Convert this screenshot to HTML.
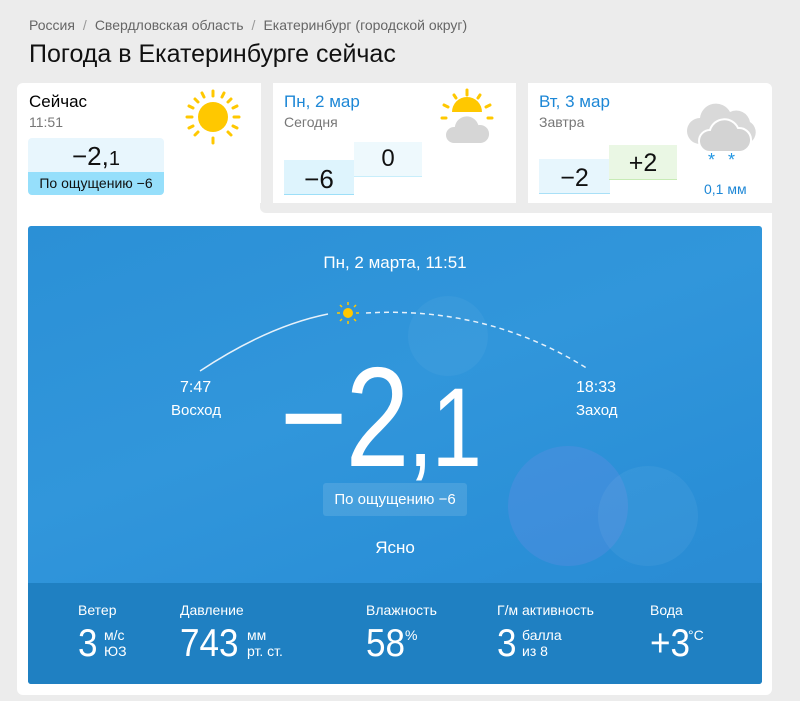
<!DOCTYPE html>
<html><head><meta charset="utf-8"><style>
*{box-sizing:border-box;margin:0;padding:0}
body{width:800px;height:701px;background:#ececec;font-family:"Liberation Sans",sans-serif;position:relative;overflow:hidden;color:#000}
.a{position:absolute}
.bc{left:29px;top:17px;font-size:14px;color:#666}
.bc span{margin:0 8px;color:#999}
h1{position:absolute;left:29px;top:40px;font-size:25px;font-weight:normal;color:#111}
.card{position:absolute;background:#fff;border-radius:6px}
.t1{font-size:17px}
.sub{font-size:14px;color:#777}
.blue{color:#1d87d6}
.box{position:absolute;text-align:center;color:#111}
.panel{position:absolute;left:28px;top:226px;width:734px;height:458px;border-radius:3px;overflow:hidden;background:linear-gradient(160deg,#2b90d6 0%,#3196db 40%,#2a8fd7 70%,#2a88d0 100%)}
.w{color:#fff}
.stats{position:absolute;left:0;top:357px;width:734px;height:101px;background:#1f80c2}
.lab{position:absolute;top:19px;font-size:14px;color:#fff}
.val{position:absolute;top:39px;font-size:39px;color:#fff;transform:scaleX(0.9);transform-origin:left}
.sm{position:absolute;font-size:14px;color:#fff;line-height:16px}
</style></head><body>
<div class="a bc">Россия<span>/</span>Свердловская область<span>/</span>Екатеринбург (городской округ)</div>
<h1>Погода в Екатеринбурге сейчас</h1>

<div class="card" style="left:17px;top:83px;width:755px;height:612px;border-radius:6px"></div>
<div class="a" style="left:261px;top:80px;width:12px;height:128px;background:#ececec"></div>
<div class="a" style="left:516px;top:80px;width:12px;height:128px;background:#ececec"></div>
<div class="a" style="left:260px;top:203px;width:520px;height:10px;background:#ececec;border-radius:0 0 0 6px"></div>
<div class="a" style="left:772px;top:80px;width:28px;height:140px;background:#ececec"></div>

<div class="a t1" style="left:29px;top:92px">Сейчас</div>
<div class="a sub" style="left:29px;top:114px">11:51</div>
<svg class="a" style="left:183px;top:88px" width="60" height="58" viewBox="0 0 60 58"><circle cx="30" cy="29" r="15" fill="#ffc800"/><g stroke="#ffc800" stroke-width="3" stroke-linecap="round"><line x1="30" y1="3" x2="30" y2="8"/><line x1="30" y1="50" x2="30" y2="55"/><line x1="4" y1="29" x2="9" y2="29"/><line x1="51" y1="29" x2="56" y2="29"/><line x1="12" y1="11" x2="15" y2="14"/><line x1="45" y1="44" x2="48" y2="47"/><line x1="48" y1="11" x2="45" y2="14"/><line x1="12" y1="47" x2="15" y2="44"/><line x1="19" y1="5" x2="21" y2="9"/><line x1="41" y1="5" x2="39" y2="9"/><line x1="6" y1="18" x2="10" y2="20"/><line x1="54" y1="18" x2="50" y2="20"/><line x1="6" y1="40" x2="10" y2="38"/><line x1="54" y1="40" x2="50" y2="38"/></g></svg>
<div class="box" style="left:28px;top:138px;width:136px;height:34px;background:#e8f6fd;border-radius:4px 4px 0 0;font-size:26px;line-height:36px">−2,<span style="font-size:20px">1</span></div>
<div class="box" style="left:28px;top:172px;width:136px;height:23px;background:#96dffb;border-radius:0 0 4px 4px;font-size:14px;line-height:23px">По ощущению −6</div>

<div class="card" style="left:273px;top:83px;width:243px;height:120px"></div>
<div class="a t1 blue" style="left:284px;top:92px">Пн, 2 мар</div>
<div class="a sub" style="left:284px;top:114px">Сегодня</div>
<svg class="a" style="left:440px;top:88px" width="56" height="58" viewBox="0 0 56 58"><path d="M12 24a15 15 0 0 1 30 0z" fill="#ffc800"/><g stroke="#ffc800" stroke-width="3" stroke-linecap="round"><line x1="27" y1="2" x2="27" y2="7"/><line x1="14" y1="7" x2="16" y2="10"/><line x1="40" y1="7" x2="38" y2="10"/><line x1="4" y1="17" x2="8" y2="19"/><line x1="50" y1="17" x2="46" y2="19"/><line x1="2" y1="30" x2="6" y2="30"/><line x1="48" y1="30" x2="52" y2="30"/></g><path d="M14 56a9 9 0 0 1 0-18a13 13 0 0 1 25-2a10 10 0 0 1 2 20z" fill="#d6d6d6" stroke="#fff" stroke-width="2"/></svg>
<div class="box" style="left:284px;top:160px;width:70px;height:35px;background:#def4fd;border-bottom:1px solid #9ddff8;font-size:26px;line-height:38px">−6</div>
<div class="box" style="left:354px;top:142px;width:68px;height:35px;background:#eef9fd;border-bottom:1px solid #c8eefb;font-size:24px;line-height:34px">0</div>

<div class="card" style="left:528px;top:83px;width:244px;height:120px"></div>
<div class="a t1 blue" style="left:539px;top:92px">Вт, 3 мар</div>
<div class="a sub" style="left:539px;top:114px">Завтра</div>
<svg class="a" style="left:686px;top:94px" width="70" height="72" viewBox="0 0 70 72"><path d="M14 50a13 13 0 0 1 0-26a16 16 0 0 1 30-6a14 14 0 0 1 20 10a12 12 0 0 1-4 22z" fill="#d9d9d9"/><path d="M24 58a11 11 0 0 1 0-22a15 15 0 0 1 28-2a12 12 0 0 1 2 24z" fill="#d3d3d3" stroke="#fff" stroke-width="2"/><text x="22" y="72" font-size="18" fill="#2196e3" font-family="Liberation Sans">*</text><text x="42" y="72" font-size="18" fill="#2196e3" font-family="Liberation Sans">*</text></svg>
<div class="box" style="left:539px;top:159px;width:71px;height:35px;background:#e7f6fd;border-bottom:1px solid #a9e0f7;font-size:25px;line-height:38px">−2</div>
<div class="box" style="left:609px;top:145px;width:68px;height:35px;background:#eaf7e4;border-bottom:1px solid #c8ebb6;font-size:25px;line-height:36px">+2</div>
<div class="a blue" style="left:704px;top:181px;font-size:14px">0,1 мм</div>

<div class="panel">
<div class="a" style="left:380px;top:70px;width:80px;height:80px;border-radius:50%;background:rgba(255,255,255,0.04)"></div>
<div class="a" style="left:480px;top:220px;width:120px;height:120px;border-radius:50%;background:rgba(120,140,230,0.25)"></div>
<div class="a" style="left:570px;top:240px;width:100px;height:100px;border-radius:50%;background:rgba(255,255,255,0.05)"></div>
<svg class="a" style="left:0;top:0" width="734" height="200"><path d="M172 145 Q240 100 300 88" stroke="#e6f1fa" stroke-width="1.5" fill="none"/><path d="M338 87 Q460 80 560 143" stroke="#e6f1fa" stroke-width="1.5" fill="none" stroke-dasharray="5 4"/><circle cx="320" cy="87" r="5" fill="#ffc800"/><g stroke="#ffc800" stroke-width="1.5"><line x1="320" y1="76" x2="320" y2="79"/><line x1="320" y1="95" x2="320" y2="98"/><line x1="309" y1="87" x2="312" y2="87"/><line x1="328" y1="87" x2="331" y2="87"/><line x1="312" y1="79" x2="314" y2="81"/><line x1="326" y1="93" x2="328" y2="95"/><line x1="328" y1="79" x2="326" y2="81"/><line x1="312" y1="95" x2="314" y2="93"/></g></svg>
<div class="a w" style="left:0;width:734px;top:27px;text-align:center;font-size:17px">Пн, 2 марта, 11:51</div>
<div class="a w" style="left:152px;top:153px;font-size:16px">7:47</div>
<div class="a w" style="left:143px;top:176px;font-size:15px">Восход</div>
<div class="a w" style="left:548px;top:153px;font-size:16px">18:33</div>
<div class="a w" style="left:548px;top:176px;font-size:15px">Заход</div>
<div class="a w" style="left:252px;top:121px;font-size:142px;line-height:142px;white-space:nowrap;letter-spacing:-2px;transform:scaleX(0.81);transform-origin:left">−2<span style="font-size:112px">,1</span></div>
<div class="a w" style="left:295px;top:257px;width:144px;height:33px;background:rgba(255,255,255,0.12);border-radius:3px;text-align:center;line-height:33px;font-size:15px">По ощущению −6</div>
<div class="a w" style="left:0;width:734px;top:312px;text-align:center;font-size:17px">Ясно</div>
<div class="stats">
<div class="lab" style="left:50px">Ветер</div>
<div class="val" style="left:50px">3</div>
<div class="sm" style="left:76px;top:44px">м/с<br>ЮЗ</div>
<div class="lab" style="left:152px">Давление</div>
<div class="val" style="left:152px">743</div>
<div class="sm" style="left:219px;top:44px">мм<br>рт. ст.</div>
<div class="lab" style="left:338px">Влажность</div>
<div class="val" style="left:338px">58</div>
<div class="sm" style="left:377px;top:44px">%</div>
<div class="lab" style="left:469px">Г/м активность</div>
<div class="val" style="left:469px">3</div>
<div class="sm" style="left:494px;top:44px">балла<br>из 8</div>
<div class="lab" style="left:622px">Вода</div>
<div class="val" style="left:622px">+3</div>
<div class="sm" style="left:660px;top:44px">°C</div>
</div>
</div>
</body></html>
